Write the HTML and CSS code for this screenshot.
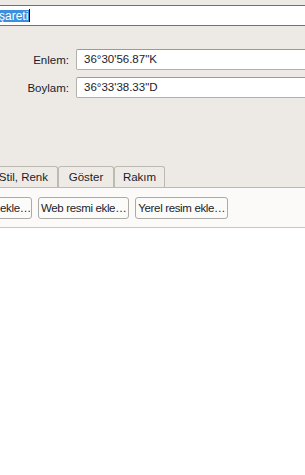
FILE: index.html
```html
<!DOCTYPE html>
<html>
<head>
<meta charset="utf-8">
<link rel="stylesheet" href="styles.css">
</head>
<body>
<div class="page">
  <div class="name-field">
    <span class="sel">şareti</span><span class="caret"></span>
  </div>
  <div class="coords">
    <label class="lbl">Enlem:</label>
    <div class="field">36°30'56.87"K</div>
    <label class="lbl">Boylam:</label>
    <div class="field">36°33'38.33"D</div>
  </div>
  <div class="tabs">
    <div class="tab first">Stil, Renk</div>
    <div class="tab">Göster</div>
    <div class="tab">Rakım</div>
  </div>
  <div class="panel">
    <button class="btn first">ekle…</button>
    <button class="btn">Web resmi ekle…</button>
    <button class="btn">Yerel resim ekle…</button>
  </div>
  <div class="blank"></div>
</div>
</body>
</html>
```
FILE: styles.css
```css
html, body {
  margin: 0;
  padding: 0;
}
body {
  width: 305px;
  height: 475px;
  overflow: hidden;
  background: #ffffff;
  font-family: "Liberation Sans", Arial, sans-serif;
  font-size: 11px;
  color: #1b1b2b;
}
.page {
  display: flex;
  flex-direction: column;
  background: #edeae5;
}
.name-field {
  margin-top: 5px;
  margin-left: -3px;
  width: 320px;
  height: 19px;
  border-top: 1px solid #3a7fba;
  border-bottom: 1px solid #3a7fba;
  background: #fff;
  display: flex;
  align-items: center;
  padding-left: 2px;
  font-size: 12px;
}
.sel {
  background: #3a8fe0;
  color: #fff;
  line-height: 12px;
  padding: 0 1px 0 1px;
  height: 12px;
  margin-left: -1px;
}
.caret {
  width: 1px;
  height: 13px;
  background: #000;
}
.coords {
  display: grid;
  grid-template-columns: 69px 260px;
  column-gap: 7px;
  row-gap: 7px;
  margin-top: 23px;
  align-items: center;
}
.lbl {
  text-align: right;
  font-size: 11.5px;
}
.field {
  height: 19px;
  border: 1px solid #b4b1aa;
  border-top-color: #9c9a95;
  border-radius: 2px;
  background: #fff;
  padding-left: 7px;
  line-height: 19px;
  font-size: 11.5px;
}
.tabs {
  display: flex;
  margin-top: 68px;
  height: 21px;
  align-items: stretch;
}
.tab {
  box-sizing: border-box;
  border: 1px solid #bdbab3;
  border-bottom: none;
  border-radius: 3px 3px 0 0;
  background: #eeebe6;
  padding: 0;
  text-align: center;
  line-height: 20px;
  margin-right: 0;
  font-size: 11.5px;
  white-space: nowrap;
}
.tab.first {
  margin-left: -8px;
  padding-left: 0;
  width: 66px;
  text-align: right;
  padding-right: 9px;
}
.tab:nth-child(2) { width: 56px; }
.tab:nth-child(3) { width: 51px; }
.panel {
  border-top: 1px solid #bdbab3;
  border-bottom: 1px solid #c9c6c0;
  background: #fbfaf8;
  height: 39px;
  display: flex;
  align-items: center;
  gap: 6px;
  width: 320px;
}
.btn {
  font-family: inherit;
  font-size: 11.5px;
  color: #1b1b2b;
  height: 22px;
  margin: 0;
  padding: 0 2px;
  background: #fbfbfa;
  border: 1px solid #adaba6;
  border-radius: 3px;
  white-space: nowrap;
  letter-spacing: -0.35px;
}
.btn.first {
  margin-left: -3px;
  width: 35px;
  text-align: right;
  padding-right: 3px;
}
.blank {
  background: #fff;
  height: 250px;
}
```
